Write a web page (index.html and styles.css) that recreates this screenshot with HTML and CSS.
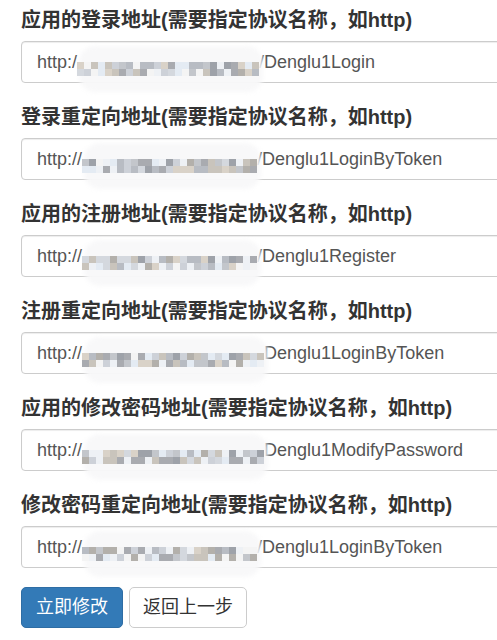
FILE: index.html
```html
<!DOCTYPE html>
<html lang="zh-CN">
<head>
<meta charset="utf-8">
<title>修改地址</title>
<link rel="stylesheet" href="styles.css">
</head>
<body>
<form class="form">
  <div class="group">
    <label class="label">应用的登录地址(需要指定协议名称，如http)</label>
    <div class="input">http:/<span class="mosaic" data-cells="26" data-seed="3"></span>/Denglu1Login</div>
  </div>
  <div class="group">
    <label class="label">登录重定向地址(需要指定协议名称，如http)</label>
    <div class="input">http://<span class="mosaic" data-cells="25" data-seed="7"></span>/Denglu1LoginByToken</div>
  </div>
  <div class="group">
    <label class="label">应用的注册地址(需要指定协议名称，如http)</label>
    <div class="input">http://<span class="mosaic" data-cells="25" data-seed="11"></span>/Denglu1Register</div>
  </div>
  <div class="group">
    <label class="label">注册重定向地址(需要指定协议名称，如http)</label>
    <div class="input">http://<span class="mosaic" data-cells="26" data-seed="19"></span>Denglu1LoginByToken</div>
  </div>
  <div class="group">
    <label class="label">应用的修改密码地址(需要指定协议名称，如http)</label>
    <div class="input">http://<span class="mosaic" data-cells="26" data-seed="23"></span>Denglu1ModifyPassword</div>
  </div>
  <div class="group">
    <label class="label">修改密码重定向地址(需要指定协议名称，如http)</label>
    <div class="input">http://<span class="mosaic" data-cells="25" data-seed="31"></span>/Denglu1LoginByToken</div>
  </div>
  <div class="actions">
    <button type="button" class="btn btn-primary">立即修改</button>
    <button type="button" class="btn btn-default">返回上一步</button>
  </div>
</form>
<script src="script.js"></script>
</body>
</html>
```
FILE: styles.css
```css
html, body {
  margin: 0;
  padding: 0;
  overflow: hidden;
  background: #fff;
}
body {
  font-family: "Liberation Sans", Arial, "Noto Sans CJK SC", sans-serif;
  color: #333;
}
.form {
  padding: 6px 0 0 21px;
}
.group {
  margin-bottom: 20px;
}
.label {
  display: block;
  font-size: 20px;
  font-weight: bold;
  line-height: 28px;
  margin-bottom: 7px;
  color: #333;
  white-space: nowrap;
}
.input {
  box-sizing: border-box;
  width: 520px;
  height: 42px;
  padding: 0 15px;
  border: 1px solid #ccc;
  border-radius: 4px;
  box-shadow: inset 0 1px 1px rgba(0,0,0,.075);
  font-size: 18px;
  line-height: 40px;
  color: #555;
  white-space: nowrap;
}
.mosaic {
  position: relative;
  z-index: 1;
  display: inline-grid;
  grid-template-rows: 7px 7px;
  grid-auto-flow: column;
  grid-auto-columns: 7px;
  height: 14px;
  vertical-align: -1px;
}
.mosaic::before {
  content: "";
  position: absolute;
  z-index: -1;
  top: -16px;
  bottom: -16px;
  left: 2px;
  right: -4px;
  border-radius: 16px;
  background: rgba(248,248,249,0.95);
  filter: blur(2px);
}
.mosaic .cell {
  width: 7px;
  height: 7px;
}
.actions {
  display: flex;
  gap: 6px;
  margin-top: -1px;
}
.btn {
  box-sizing: border-box;
  height: 41px;
  padding: 0 14px;
  font-family: "Liberation Sans", Arial, "Noto Sans CJK SC", sans-serif;
  font-size: 18px;
  line-height: 39px;
  border-radius: 5px;
  border: 1px solid #ccc;
  cursor: pointer;
}
.btn-primary {
  background: #337ab7;
  border-color: #2e6da4;
  color: #fff;
}
.btn-default {
  background: #fff;
  color: #333;
  padding: 0 13px;
}
```
FILE: script.js
```js
(function () {
  var palette = ['#b8bcc3', '#a9abb0', '#cdd1d8', '#d9d2c8', '#e4ebf3', '#9ea2a9', '#c3c6cb', '#eef1f5', '#b3b0ab', '#d4d8de', '#f4f4f4', '#c9c4bc'];
  var nodes = document.querySelectorAll('.mosaic');
  for (var i = 0; i < nodes.length; i++) {
    var el = nodes[i];
    var n = parseInt(el.getAttribute('data-cells'), 10) * 2;
    var s = parseInt(el.getAttribute('data-seed'), 10) * 7919 + 12345;
    for (var k = 0; k < n; k++) {
      s = (s * 16807) % 2147483647;
      var idx = Math.floor((s / 2147483647) * palette.length);
      var c = document.createElement('span');
      c.className = 'cell';
      c.style.background = palette[idx];
      el.appendChild(c);
    }
  }
})();
```
